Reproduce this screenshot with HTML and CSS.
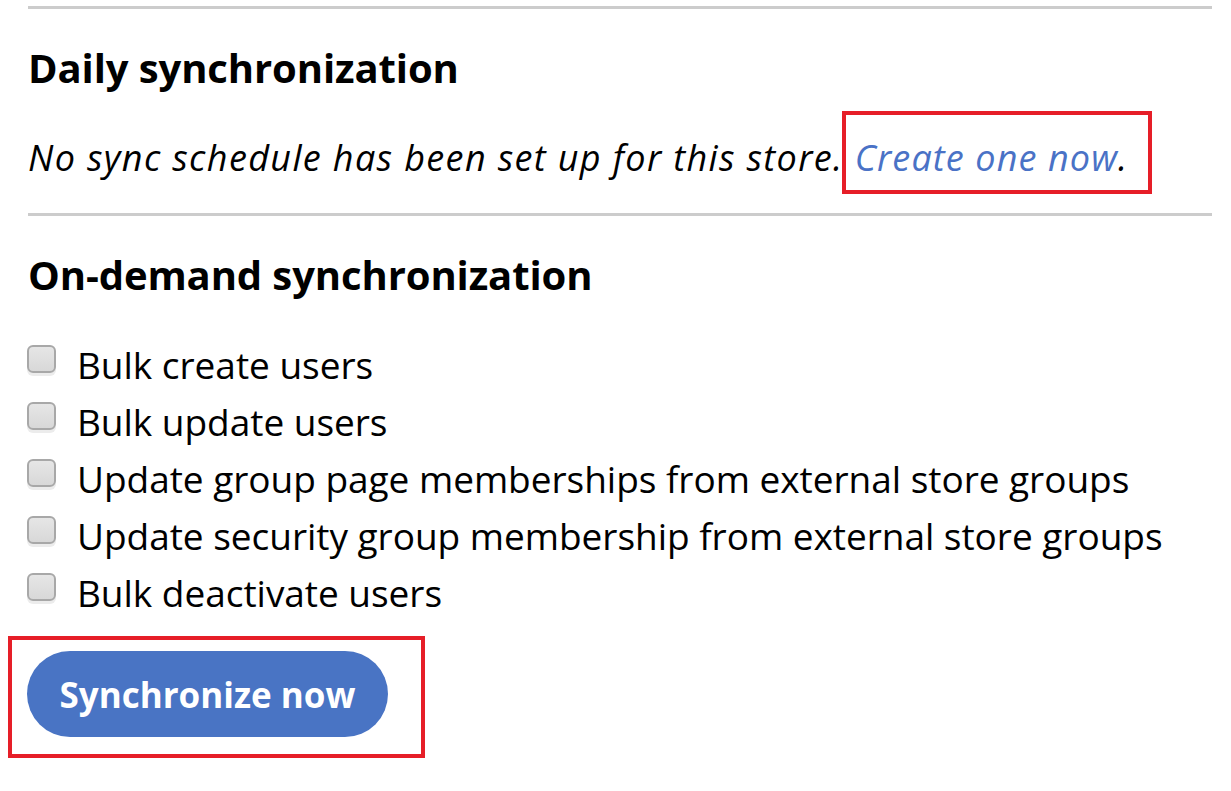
FILE: index.html
```html
<!DOCTYPE html>
<html>
<head>
<meta charset="utf-8">
<link rel="stylesheet" href="styles.css">
</head>
<body>
<div class="page">
  <hr class="rule">
  <section class="section daily">
    <h2 class="title">Daily synchronization</h2>
    <p class="note">No sync schedule has been set up for this store.<span class="gap"> </span><a class="link" href="#">Create one now</a>.<span class="callout callout-link"></span></p>
  </section>
  <hr class="rule">
  <section class="section ondemand">
    <h2 class="title">On-demand synchronization</h2>
    <ul class="options">
      <li class="option"><span class="box"></span><span class="label">Bulk create users</span></li>
      <li class="option"><span class="box"></span><span class="label">Bulk update users</span></li>
      <li class="option"><span class="box"></span><span class="label">Update group page memberships from external store groups</span></li>
      <li class="option"><span class="box"></span><span class="label">Update security group membership from external store groups</span></li>
      <li class="option"><span class="box"></span><span class="label">Bulk deactivate users</span></li>
    </ul>
    <div class="actions">
      <button class="btn">Synchronize now</button>
      <span class="callout callout-btn"></span>
    </div>
  </section>
</div>
</body>
</html>
```

FILE: styles.css
```css
html, body {
  margin: 0;
  padding: 0;
  background: #ffffff;
}
body {
  font-family: "Open Sans", "Noto Sans", sans-serif;
  color: #000;
  min-height: 791px;
}
.page {
  width: 1184px;
  margin-left: 28px;
  padding-top: 6px;
  padding-bottom: 40px;
}
.rule {
  border: 0;
  height: 3px;
  background: #cccccc;
  margin: 0;
}
.title {
  font-size: 40px;
  font-weight: 700;
  margin: 0;
  line-height: 48px;
  letter-spacing: -0.1px;
}
.daily .title {
  padding-top: 35px;
}
.note {
  position: relative;
  font-style: italic;
  font-size: 36px;
  line-height: 48px;
  margin: 0;
  padding-top: 42px;
  padding-bottom: 31px;
  letter-spacing: 1.35px;
}
.gap {
  letter-spacing: 0;
  word-spacing: 2px;
}
.link {
  color: #4a72c6;
  text-decoration: none;
  letter-spacing: 1.1px;
}
.callout {
  position: absolute;
  box-sizing: border-box;
  border: 4px solid #e61e28;
  pointer-events: none;
}
.callout-link {
  left: 814px;
  top: 19px;
  width: 310px;
  height: 83px;
}
.ondemand .title {
  padding-top: 35px;
}
.options {
  list-style: none;
  margin: 0;
  padding: 0;
  padding-top: 37px;
}
.option {
  display: flex;
  align-items: flex-start;
  gap: 21px;
  height: 57px;
}
.box {
  width: 29px;
  height: 28px;
  box-sizing: border-box;
  border: 2px solid #a8a8a8;
  border-radius: 6px;
  background: linear-gradient(#e6e6e6, #d8d8d8);
  box-shadow: 0 3px 0 #ececec;
  flex: none;
  margin-top: 9px;
  margin-left: -1px;
}
.label {
  font-size: 37px;
  line-height: 57px;
  letter-spacing: -0.03px;
}
.actions {
  position: relative;
  padding-top: 30px;
}
.btn {
  display: block;
  height: 86px;
  width: 361px;
  border: 0;
  border-radius: 43px;
  background: #4974c4;
  color: #fff;
  font-family: "Open Sans", "Noto Sans", sans-serif;
  font-size: 35px;
  font-weight: 700;
  letter-spacing: 0;
  padding: 0;
  margin-left: -1px;
}
.callout-btn {
  left: -20px;
  top: 15px;
  width: 417px;
  height: 122px;
}
```
